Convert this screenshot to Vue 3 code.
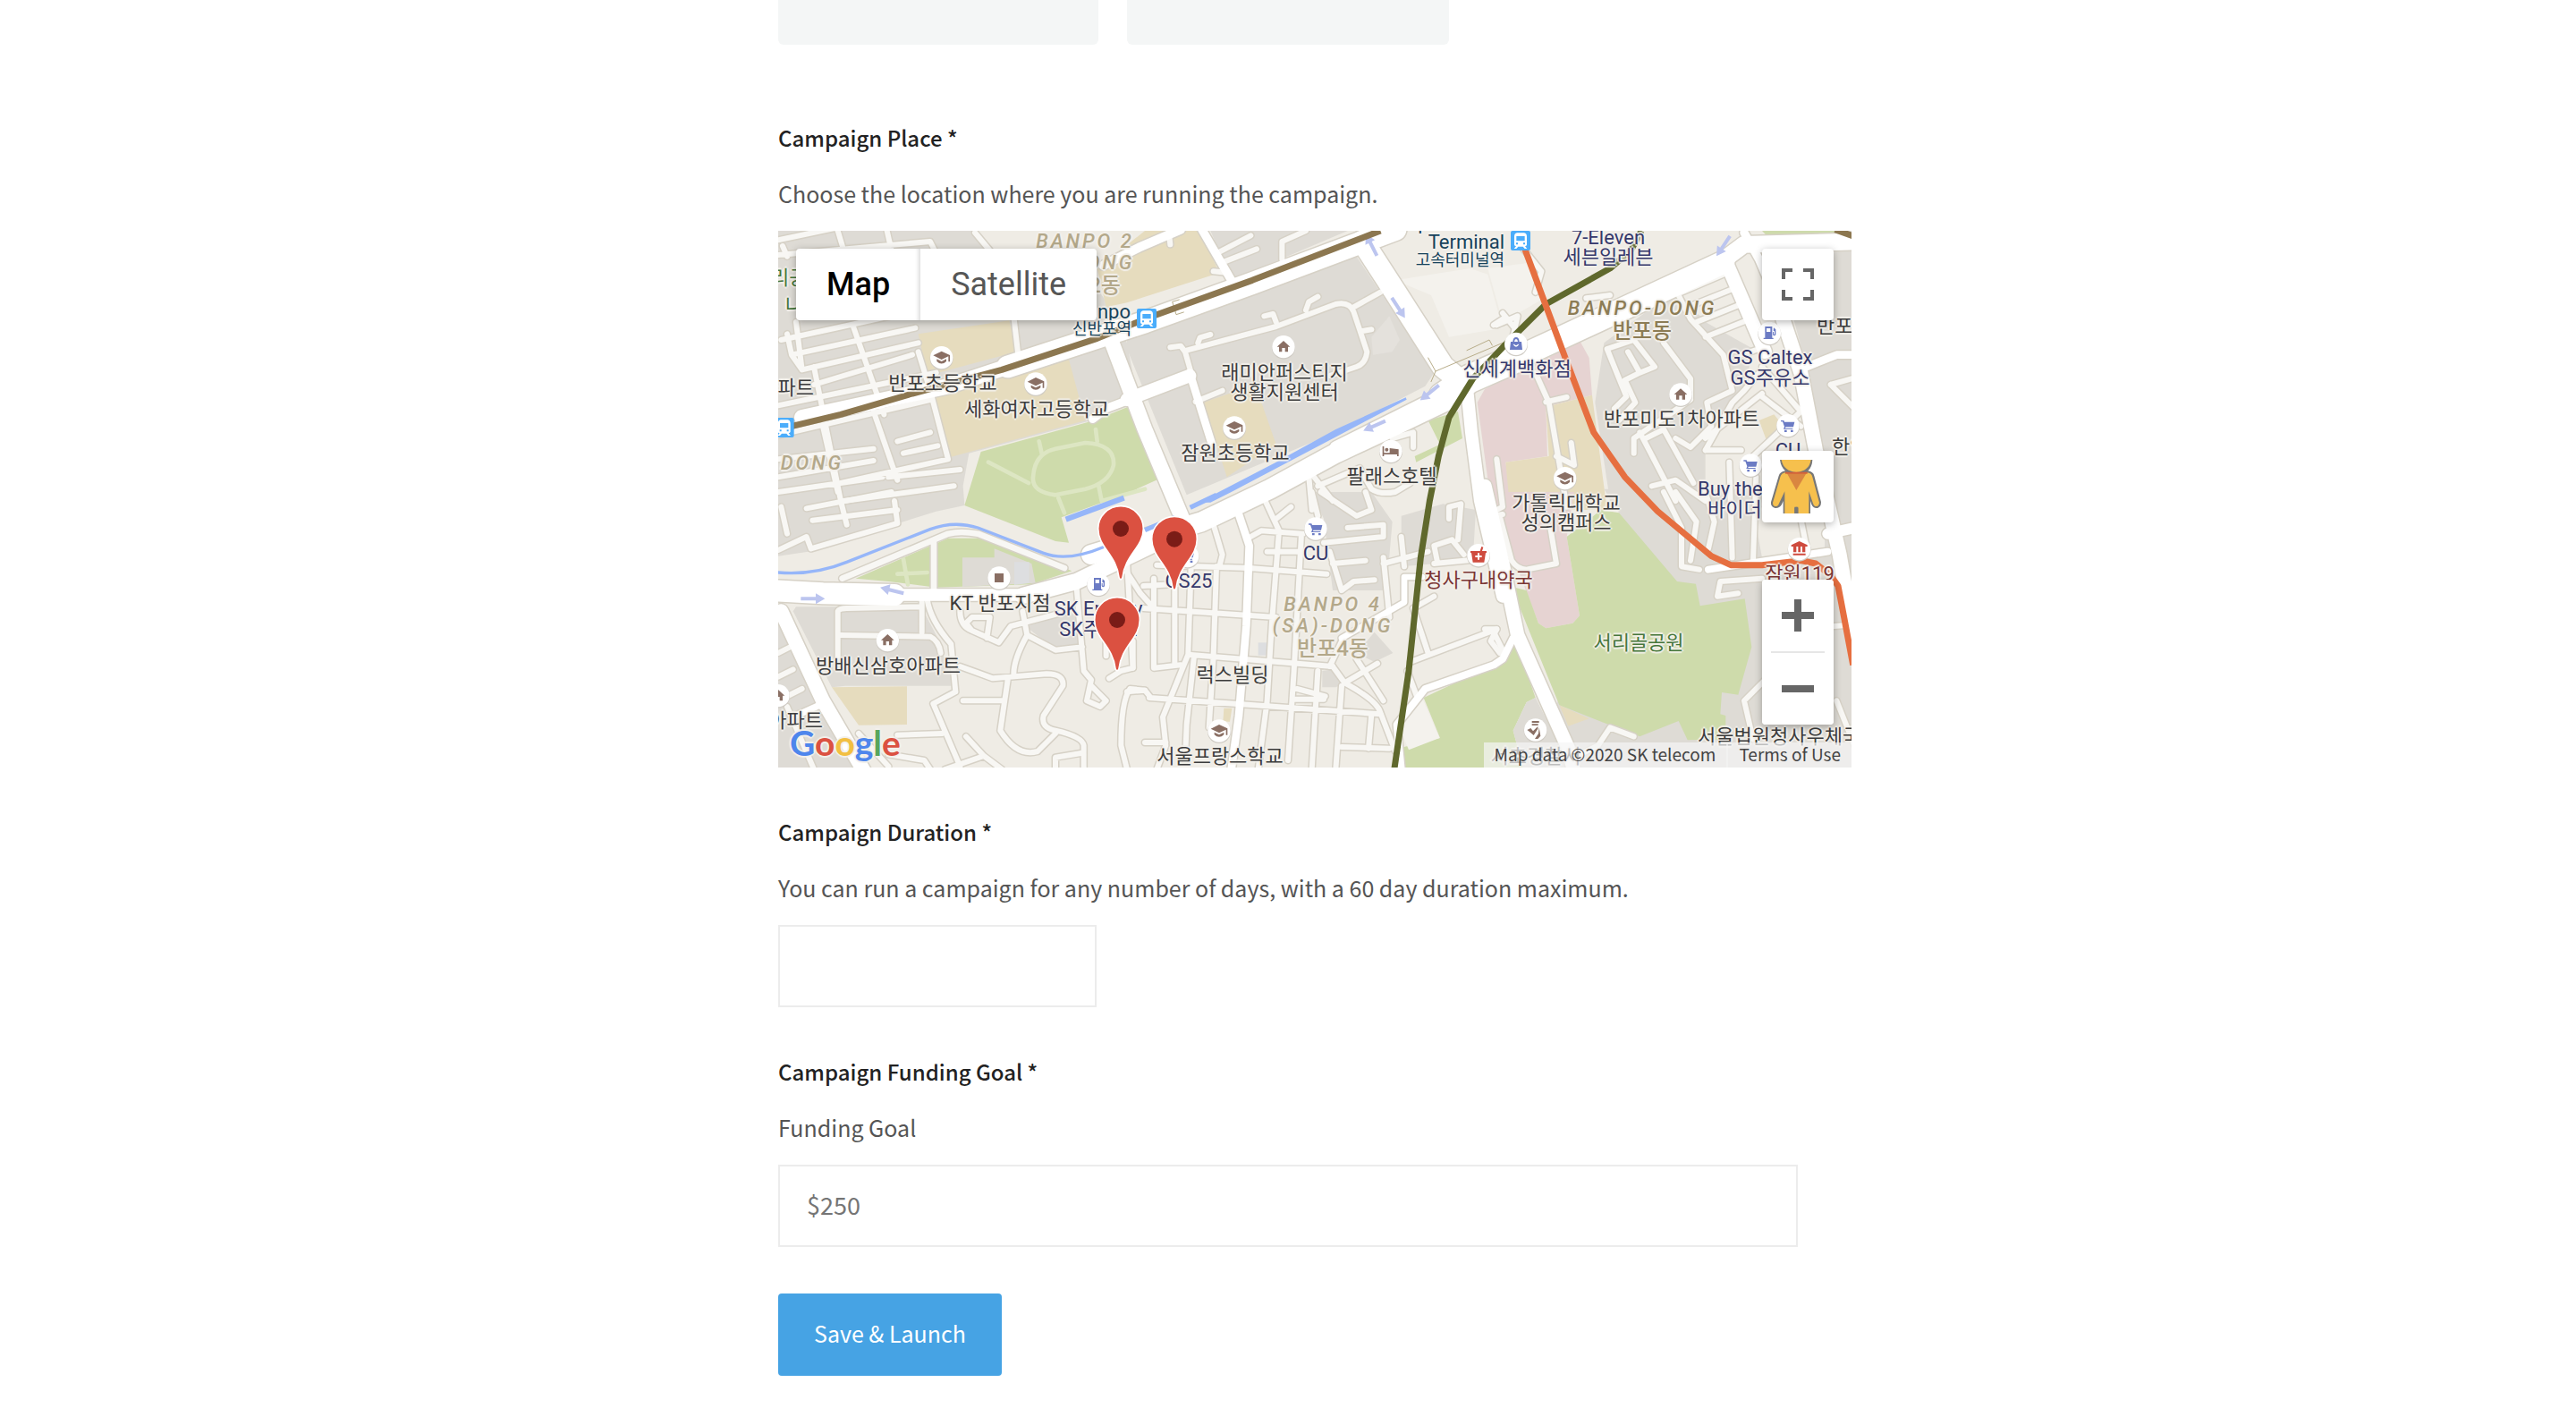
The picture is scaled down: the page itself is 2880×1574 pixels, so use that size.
<script setup>
import { ref } from 'vue'

const duration = ref('')
const goal = ref('')

// Origins of the six map tiles inside the 3600 x 1800 drawing.
const origins = [[-30, -24], [1170, -24], [2370, -24], [-30, 876], [1170, 876], [2370, 876]]
const at = (t, x = 0, y = 0) => `translate(${origins[t][0] + x} ${origins[t][1] + y})`

const block = '#dedbd5'
const park = '#cedbab'
const school = '#e6dcbe'
const clinic = '#e6d3d2'

const areas = [
  { t: 0, c: block, d: 'M30 24H960L1130 260L1200 400L1230 560L1080 660L670 770L650 880L655 945L560 965L130 1100L30 1115Z' },
  { t: 0, c: '#efece5', d: 'M690 24H1160L1200 110L1110 150L740 90Z' },
  { t: 0, c: school, d: 'M500 370L805 325L830 430L530 510Z' },
  { t: 0, c: school, d: 'M555 580L1005 455L1060 660L600 785Z' },
  { t: 0, c: park, d: 'M710 765L1090 660L1215 610L1310 855L1200 905L980 985L1005 1070L960 1065L655 945Z' },
  { t: 1, c: block, d: 'M280 24H740L350 190Z' },
  { t: 1, c: school, d: 'M60 24H245L310 165L0 265L-70 280L-100 150Z' },
  { t: 1, c: block, d: 'M0 370L760 95L1030 500L1000 545L700 700L200 910L0 420Z' },
  { t: 1, c: school, d: 'M255 600L430 540L500 740L335 850Z' },
  { t: 1, c: '#e4e1dc', d: 'M820 380L880 310L915 390L890 430L825 440Z' },
  { t: 1, c: '#f4f2ed', d: 'M900 190L1150 150L1210 170L1260 350L1080 380L1020 240Z' },
  { t: 1, c: park, d: 'M1010 660L1110 630L1125 720L970 800L965 780L1050 740Z' },
  { t: 2, c: '#f4f2ed', d: 'M10 150L160 130L200 250L60 330Z' },
  { t: 2, c: block, d: 'M400 400L590 260L660 240L740 330L900 420L870 560L740 720V930H420L370 600Z' },
  { t: 2, c: block, d: 'M1060 24H1230V930H1140L1100 560L1020 260Z' },
  { t: 2, c: '#efece5', d: 'M860 560L1060 540L1100 700L1110 760L860 900L750 900L760 760Z' },
  { t: 2, c: school, d: 'M920 660L970 640L1010 690L950 740Z' },
  { t: 2, c: park, d: 'M930 24H1180L1240 70L950 45Z' },
  { t: 5, c: block, d: 'M400 -10H1230V930H290L240 715L450 70Z' },
  { t: 5, c: '#efece5', d: 'M930 220L1140 190V90L1040 20L900 60Z' },
  { t: 2, c: clinic, d: 'M-25 600L0 555L320 395L350 450L360 575L205 615L210 780L70 800L90 930H20Z' },
  { t: 2, c: school, d: 'M205 615L360 575L410 960H85L70 800L215 780Z' },
  { t: 5, c: clinic, d: 'M20 0H300L275 150L318 415L295 440L205 457L180 440L100 230Z' },
  { t: 5, c: park, d: 'M390 60L450 70L645 300L708 308L722 382L872 358L895 520L850 680L795 672L790 745L808 750V830L680 832L650 768L520 820L440 790L250 715L110 370L100 320L140 330L180 440L205 457L295 440L318 415L275 150Z' },
  { t: 5, c: park, d: 'M105 500L170 690L140 705L95 800L130 930H-280L-310 865L-150 825L-205 690L60 565Z' },
  { t: 5, c: block, d: 'M140 705L170 690L290 930H130L95 800Z' },
  { t: 5, c: school, d: 'M250 715L350 760L280 785Z' },
  { t: 3, c: park, d: 'M290 290L600 155L700 155L850 200L1015 265L880 310L560 320L400 300Z' },
  { t: 3, c: block, d: 'M648 220H755V190L880 240L893 305L648 318Z' },
  { t: 3, c: '#dddee0', d: 'M822 235H872V305L822 312Z' },
  { t: 3, c: block, d: 'M90 385H510L560 480L620 650H255L210 655L80 400Z' },
  { t: 3, c: block, d: 'M30 400L180 700L290 930H30Z' },
  { t: 3, c: block, d: 'M860 450L1040 400L1050 530H960Z' },
  { t: 3, c: school, d: 'M210 655L462 652V780L300 782Z' },
  { t: 4, c: block, d: 'M620 0H820L890 100L870 330H690L660 90Z' },
  { t: 4, c: block, d: 'M830 470L892 540L830 570L770 540Z' },
  { t: 4, c: block, d: 'M655 600L690 595L735 640L700 655H655Z' },
  { t: 4, c: block, d: 'M920 80L1060 40L1170 60L1160 230L920 250Z' },
  { t: 4, c: '#dddee0', d: 'M440 505H470V548H440Z' },
  { t: 4, c: school, d: 'M325 725H352L345 770H322Z' },
  { t: 4, c: '#f4f2ed', d: 'M990 690L1048 825L945 865L910 780Z' }
]

const minor = [
  { t: 0, d: 'M30 55L220 15M45 75L60 110M30 105L540 60L555 90M230 24L250 90M395 24L410 90M690 30L740 90' },
  { t: 0, d: 'M40 390L500 290M75 440L490 350M110 490L500 400M150 540L480 440M30 610L560 500M90 330L110 490M60 370L75 440L110 490M150 480L240 930L260 1010M280 340L385 640' },
  { t: 0, d: 'M30 710L545 590M500 430L540 560L600 790M350 630L430 860M30 790L350 755M30 850L350 795M30 900L380 850M430 730L540 700M450 770L565 745M240 870L600 790M400 850L640 825M250 930L620 880M180 680L230 900M820 310L835 440' },
  { t: 1, d: 'M200 425L500 345L700 270Q745 260 760 295L805 430Q800 470 770 480L680 510M195 430L215 500M145 415L180 410L195 430M238 400L245 382L280 372M460 310L490 303L500 330M600 290L610 262L640 245M760 280L850 230M790 360L820 355M320 130L435 85M300 100L415 40M520 120V60L600 24M290 160L340 165M140 24L145 70M230 597L320 560' },
  { t: 1, d: 'M640 880L780 820L820 890Q850 910 900 900L950 870M620 840L690 930M890 720L960 700V750M610 850L620 960M1230 340L1260 320' },
  { t: 2, d: 'M110 60L190 160L170 230M40 340L110 310L90 400M60 300L100 350M340 250L420 240' },
  { t: 2, d: 'M410 420L500 390L570 480L520 500L480 430M410 420L475 580L435 620M520 500L470 525L505 600L450 660M600 400L690 520V590L620 640M650 240L690 320L800 440L830 560L745 600L760 680L690 750L640 720M660 230L800 170M680 280L830 220M710 330L860 270M740 380L890 320M500 770V720L690 590M520 700L640 930M600 690L700 870M740 760H860M540 720L600 690M740 760L830 600L870 560L920 500M740 720L930 570M930 480L1060 630L900 780M930 580L1060 680M1160 540L1240 620M1160 540L1230 520M860 440L920 420' },
  { t: 2, d: 'M170 500L215 600L275 950M205 598L275 582M290 735L300 810L240 780M40 790L60 950L20 970M560 880L640 860L740 930M820 800L830 1120M910 850L900 1130' },
  { t: 3, w: 20, d: 'M245 290L600 140Q640 130 700 140L990 255M552 170V330' },
  { t: 3, d: 'M230 560V400Q235 390 260 390L510 385M240 480L540 485Q570 500 575 540M512 360V470M530 360Q540 430 610 510L625 670M640 585L750 625L930 610Q990 610 985 650L920 750Q910 790 960 800Q1050 820 1055 850V930M625 670L550 710L640 920M650 700H780M800 630L775 800Q830 890 900 870L960 810M820 610Q820 560 865 480L850 400M640 400Q640 450 680 465L770 505L810 450L1000 400M680 465L660 440L680 420H740L730 490M865 480L960 530L1050 520M1030 310L1055 600L1080 630L1065 700L1110 720L1130 700L1080 650M1140 625L1180 600L1220 590L1200 230M1130 480V550M1260 665L1210 660Q1180 700 1180 850L1200 930' },
  { t: 3, d: 'M430 815L580 810M300 810L400 920M400 880L520 900L540 930M720 885L590 930M720 885L780 930M660 820L720 885M960 930V890L1050 875M30 540L80 515M30 620L80 595M50 690L110 660M60 720L150 930M125 55L410 0M145 95L430 60M140 190L430 105L420 30M30 195L125 150L140 190M40 50L60 140' },
  { t: 4, d: 'M100 245L410 255L670 275M55 390L500 420M205 545L690 585M75 690L850 745M720 855L880 860M60 840H130M90 290V590L180 580M160 320V580M55 315L150 310M215 250L205 545L120 755L130 850L100 930M300 250L290 550L275 790M225 550L200 780L195 900M510 130L485 450L470 700L440 930M585 140L560 600L540 900M640 600L620 930M720 650L700 930M570 660L665 685M560 695H660M585 200H470M415 150L450 130L590 140M450 0L510 130M500 90L550 50M290 110L320 210L310 250M0 270L45 340L90 390M20 500V590M0 670L60 665L80 690' },
  { t: 4, d: 'M660 170L860 150V110L740 120M680 200L720 330L760 300L830 295M690 240L800 230M860 220L880 420M860 240L1010 200M690 585L730 640L840 575M770 560L860 700M730 640Q840 700 850 740L900 870M680 585L720 500M820 745L810 860M1030 350L960 390L1010 540M950 570L1240 460M1230 470L1260 530M940 600L970 680M920 150L930 250M1040 230L1030 180L1090 160L1130 210M1080 90L1080 50L1120 40L1110 160M620 0L640 80M650 0L770 80L820 60L800 0M1030 240L1240 220' },
  { t: 5, d: 'M50 80L90 230Q110 260 140 260L240 240L220 120M640 0L710 100L690 230M600 0L660 120V250L720 260M740 0L770 100L750 190M850 340L780 350L790 300L930 290M380 850L420 790L500 820M280 900L380 850M940 630L870 700L900 830M1170 450L1240 445M1180 700L1240 850M1060 90L1080 190M0 460L40 460L20 500L50 540M20 80L60 75' }
]

const major = [
  { t: 0, w: 52, d: 'M110 650L600 545L860 460' },
  { t: 0, w: 74, d: 'M800 480L1260 330L1620 200L2100 20' },
  { t: 0, w: 50, d: 'M1150 400L1260 690L1390 1000L1415 1020' },
  { t: 0, w: 28, d: 'M1085 655L1130 620L1210 590' },
  { t: 1, w: 30, d: 'M-80 140L40 80L180 20' },
  { t: 1, w: 28, d: 'M240 0L350 190' },
  { t: 1, w: 44, d: 'M0 590L210 510' },
  { t: 1, w: 26, d: 'M210 500L285 740' },
  { t: 1, w: 74, d: 'M790 60L900 230L1060 480L1110 520' },
  { t: 1, w: 66, d: 'M-120 1110L250 1000L480 890L700 770L850 700L1080 590' },
  { t: 1, w: 40, d: 'M700 750L1020 590' },
  { t: 1, w: 94, d: 'M1060 580L1150 520L1310 450' },
  { t: 1, w: 42, d: 'M1140 550L1155 700L1185 930L1260 1250' },
  { t: 2, w: 76, d: 'M60 470L110 450L800 130' },
  { t: 2, w: 56, d: 'M790 130L870 70L1240 60' },
  { t: 2, w: 46, d: 'M810 130L940 430' },
  { t: 2, w: 28, d: 'M870 30L920 120L1010 330' },
  { t: 2, w: 48, d: 'M1000 320L1060 500L1110 760L1190 1110L1240 1400' },
  { t: 2, w: 26, d: 'M1080 480L1180 440H1240' },
  { t: 3, w: 72, d: 'M0 330L180 340L420 345' },
  { t: 3, w: 40, d: 'M380 345H860' },
  { t: 3, w: 54, d: 'M850 348L1030 300L1300 170' },
  { t: 3, w: 48, d: 'M40 400L180 700L320 940' },
  { t: 3, w: 22, d: 'M90 750L180 710' },
  { t: 4, w: 26, d: 'M370 60L410 180L400 450L375 750L350 930' },
  { t: 4, w: 24, d: 'M920 930L905 780L1000 660L1230 580L1260 560L1295 490' },
  { t: 4, w: 20, d: 'M990 285H930V370L720 490' },
  { t: 5, w: 46, d: 'M0 -20L60 240L110 480L280 860L300 940' },
  { t: 5, w: 24, d: 'M750 260L1150 200' },
  { t: 5, w: 36, d: 'M1150 140L1240 120' }
]

const parkPaths = [
  { t: 0, d: 'M905 730L915 775M1095 690L1100 730M1060 735Q1160 740 1155 810Q1140 870 1060 890L960 910Q880 900 885 850Q890 770 960 755ZM735 800L870 870M1105 880L1115 930L1260 890' },
  { t: 3, d: 'M970 20L990 70M450 225L465 310M430 275L530 270' }
]

const arrows = [
  [1, 820, 72, -117], [1, 910, 282, 57], [1, 1015, 567, 141], [1, 830, 678, 156],
  [2, 800, 75, 124], [3, 146, 358, 0], [3, 412, 330, 194]
]

const stations = [[0, 50, 684], [1, 66, 318], [2, 120, 57]]

const places = [
  ['cap', 0, 578, 449], ['cap', 0, 894, 537], ['cap', 1, 360, 684], ['cap', 2, 269, 854], ['cap', 4, 309, 801],
  ['home', 1, 525, 413], ['home', 2, 657, 573], ['home', 3, 397, 497], ['home', 3, 30, 683],
  ['bed', 1, 885, 763], ['bag', 2, 105, 403], ['fuel', 2, 955, 367], ['fuel', 3, 1104, 310],
  ['cart', 2, 1017, 677], ['cart', 2, 892, 810], ['cart', 4, 633, 123], ['cart', 4, 203, 215],
  ['office', 3, 771, 288], ['drug', 4, 1179, 212], ['hall', 5, 1055, 191], ['police', 5, 170, 798]
]

const glyphs = {
  cap: { c: '#8a6f64', d: 'M0 -21L28 -8V14H23V-4L0 7L-28 -7ZM-16 5L0 13L16 5V13Q0 28 -16 13Z' },
  home: { c: '#8a6f64', d: 'M0 -20L22 0H15V17H5V4H-5V17H-15V0H-22Z' },
  bed: { c: '#8a6f64', d: 'M-28 -16H-23V6H-4V-10L26 -6V17H21V11H-23V17H-28ZM-20 -5A6 6 0 1 1 -8 -5A6 6 0 1 1 -20 -5Z' },
  bag: { c: '#6b7bc4', d: 'M-18 -7H-11Q-10 -22 0 -22Q10 -22 11 -7H18L21 20H-21ZM-6 -7H6Q5 -16 0 -16Q-5 -16 -6 -7ZM-10 2Q0 18 10 2L6 1Q0 9 -6 1Z' },
  fuel: { c: '#6b7bc4', d: 'M-15 -22H9V16H13V20H-20V16H-15ZM-10 -16V-4H3V-16ZM14 -18L21 -12V6Q15 12 11 5V-4H14V4H17V-6L13 -8Z' },
  cart: { c: '#6b7bc4', d: 'M-24 -17H-14L-12 -12H22L18 5H-8L-9 9H16V12H-15L-12 4L-18 -13H-24ZM-12 15H-4V22H-12ZM9 15H17V22H9Z' },
  office: { c: '#8a6f64', d: 'M-15 -15H15V15H-15Z' },
  drug: { c: '#cf4b3e', d: 'M-27 -14H5L10 -29L16 -27L12 -14H27V-8H24L19 24H-19L-24 -8H-27ZM-3 -7V1H-11V7H-3V15H3V7H11V1H3V-7Z' },
  hall: { c: '#cf4b3e', d: 'M0 -26L27 -13V-8H20V11H10V-8H4V11H-4V-8H-10V11H-20V-8H-27V-13ZM-21 15H21V21H-21Z' },
  police: { c: '#8a6f64', d: 'M-12 -30H12V-24H-12ZM-12 -20H9V-15H-12ZM-28 0L-16 -6L-8 4L8 -12V-4L-6 18L-20 6ZM12 -8L17 20L8 30H-2L10 12Z' }
}

const pins = [[3, 1179, 123], [4, 159, 158], [3, 1167, 429]]

// x is the anchor: centre by default, or the edge named in "side".
const labels = [
  { k: 'ward soft', x: 343, y: 12, s: 'BANPO 2' },
  { k: 'ward soft', x: 343, y: 36, s: '(I)-DONG' },
  { k: 'wardko soft', x: 343, y: 61, s: '반포2동' },
  { k: 'green', x: -8, y: 53, s: '리공원', side: 'left' },
  { k: 'green', x: 8, y: 84, s: '나무', side: 'left' },
  { k: 'metro', x: 394, y: 91, s: 'Sinbanpo', side: 'right' },
  { k: 'metro small', x: 362, y: 110, s: '신반포역' },
  { k: '', x: 184, y: 171, s: '반포초등학교' },
  { k: '', x: 289, y: 200, s: '세화여자고등학교' },
  { k: '', x: 40, y: 176, s: '아파트', side: 'right' },
  { k: 'ward soft', x: 73, y: 260, s: 'DONG', side: 'right' },
  { k: '', x: 566, y: 159, s: '래미안퍼스티지' },
  { k: '', x: 566, y: 181, s: '생활지원센터' },
  { k: '', x: 511, y: 249, s: '잠원초등학교' },
  { k: '', x: 686, y: 275, s: '팔래스호텔' },
  { k: 'metro', x: 812, y: -9, s: 'Express Bus', side: 'right' },
  { k: 'metro', x: 812, y: 13, s: 'Terminal', side: 'right' },
  { k: 'metro small', x: 812, y: 33, s: '고속터미널역', side: 'right' },
  { k: 'shop', x: 928, y: 8, s: '7-Eleven' },
  { k: 'shop', x: 928, y: 30, s: '세븐일레븐' },
  { k: 'ward', x: 966, y: 87, s: 'BANPO-DONG' },
  { k: 'wardko', x: 966, y: 112, s: '반포동' },
  { k: 'shop', x: 826, y: 155, s: '신세계백화점' },
  { k: '', x: 1161, y: 107, s: '반포자이', side: 'left' },
  { k: 'shop', x: 1109, y: 142, s: 'GS Caltex' },
  { k: 'shop', x: 1109, y: 165, s: 'GS주유소' },
  { k: '', x: 1010, y: 211, s: '반포미도1차아파트' },
  { k: 'shop', x: 1129, y: 246, s: 'CU' },
  { k: '', x: 1178, y: 242, s: '한양', side: 'left' },
  { k: 'shop', x: 1028, y: 289, s: 'Buy the', side: 'left' },
  { k: 'shop', x: 1039, y: 312, s: '바이더웨이', side: 'left' },
  { k: '', x: 881, y: 305, s: '가톨릭대학교' },
  { k: '', x: 881, y: 327, s: '성의캠퍼스' },
  { k: 'red', x: 783, y: 391, s: '청사구내약국' },
  { k: 'green', x: 962, y: 461, s: '서리골공원' },
  { k: 'red', x: 1142, y: 384, s: '잠원119' },
  { k: '', x: 1028, y: 566, s: '서울법원청사우체국', side: 'left' },
  { k: '', x: 847, y: 588, s: '서초경찰서' },
  { k: '', x: 248, y: 417, s: 'KT 반포지점' },
  { k: 'shop', x: 358, y: 423, s: 'SK Energy' },
  { k: 'shop', x: 358, y: 446, s: 'SK주유소' },
  { k: '', x: 123, y: 487, s: '방배신삼호아파트' },
  { k: '', x: 50, y: 548, s: '아파트', side: 'right' },
  { k: 'shop', x: 459, y: 392, s: 'GS25' },
  { k: 'shop', x: 601, y: 361, s: 'CU' },
  { k: 'ward soft', x: 620, y: 418, s: 'BANPO 4' },
  { k: 'ward soft', x: 620, y: 442, s: '(SA)-DONG' },
  { k: 'wardko soft', x: 620, y: 467, s: '반포4동' },
  { k: '', x: 508, y: 497, s: '럭스빌딩' },
  { k: '', x: 494, y: 588, s: '서울프랑스학교' }
]
</script>

<template>
  <main class="page">
    <div class="cards">
      <div class="card"></div>
      <div class="card"></div>
    </div>

    <form class="form" @submit.prevent>
      <section class="field">
        <h2 class="title">Campaign Place *</h2>
        <p class="hint">Choose the location where you are running the campaign.</p>

        <div class="map">
          <svg class="layer" viewBox="0 0 3600 1800" aria-hidden="true">
            <path v-for="(a, i) in areas" :key="'a' + i" :transform="at(a.t)" :d="a.d" :fill="a.c" />
            <g class="line">
              <path v-for="(p, i) in parkPaths" :key="'p' + i" :transform="at(p.t)" :d="p.d" stroke="#dde6c3" stroke-width="14" />
              <path v-for="(r, i) in minor" :key="'mc' + i" :transform="at(r.t)" :d="r.d" stroke="#d6d1c6" :stroke-width="(r.w || 18) + 9" />
              <path v-for="(r, i) in major" :key="'Mc' + i" :transform="at(r.t)" :d="r.d" stroke="#d6d1c6" :stroke-width="r.w + 9" />
              <path v-for="(r, i) in minor" :key="'m' + i" :transform="at(r.t)" :d="r.d" stroke="#f8f7f4" :stroke-width="r.w || 18" />
              <path v-for="(r, i) in major" :key="'M' + i" :transform="at(r.t)" :d="r.d" stroke="#fff" :stroke-width="r.w" />
              <g stroke="#96b6f9">
                <path :transform="at(3)" stroke-width="10" d="M30 270Q150 280 260 235L540 125Q620 95 700 120L920 205Q1000 235 1120 185" />
                <path :transform="at(3)" stroke-width="18" stroke-linecap="butt" d="M995 92L1190 20" />
                <path :transform="at(4)" stroke-width="16" stroke-linecap="butt" d="M60 128L160 85M212 52L300 10" />
              </g>
            </g>
            <path :transform="at(1)" fill="#96b6f9" d="M240 935L500 800L700 690L935 583L938 590L720 705L350 900L280 935Z" />
            <g class="line thin">
              <path :transform="at(1)" d="M1010 450L1035 495L1020 530M1035 495L1260 400M1140 425L1215 390L1225 408M175 255L152 262L165 305L190 297" />
            </g>
            <path
              v-for="(a, i) in arrows" :key="'w' + i" fill="#bcc5ef"
              :transform="at(a[0], a[1], a[2]) + ` rotate(${a[3]})`"
              d="M-40 -6H10V-18L41 0L10 18V6H-40Z"
            />
            <g class="line rail">
              <path :transform="at(0)" stroke="#8c7750" d="M30 690L240 640L480 570L780 490L1100 385L1260 320L1300 305L1620 190L2050 24" />
              <path :transform="at(2)" stroke="#8c7750" d="M1175 20L1245 45" />
              <path :transform="at(2)" stroke="#5f682c" d="M525 24L490 90L420 150L205 270L60 415L-40 520L-120 650L-155 780L-185 930L-215 1120L-255 1500L-305 1840" />
              <path :transform="at(2)" stroke="#e66f40" d="M125 60L270 450L365 700L470 850L580 965L760 1115L825 1145H930L1060 1130L1110 1140L1160 1180L1185 1215L1205 1320L1235 1480" />
            </g>
            <g v-for="(s, i) in stations" :key="'s' + i" :transform="at(...s)">
              <rect x="-33" y="-33" width="66" height="66" rx="6" fill="#4badfb" />
              <path fill="#fff" fill-rule="evenodd" d="M-12 -26H12Q21 -24 21 -14V14Q20 18 15 19L22 27H14L8 20H-8L-14 27H-22L-15 19Q-20 18 -21 14V-14Q-21 -24 -12 -26ZM-14 -15V1H14V-15ZM-15 7V13H-9V7ZM9 7V13H15V7Z" />
            </g>
            <g v-for="(p, i) in places" :key="'i' + i" :transform="at(p[1], p[2], p[3])">
              <circle cy="3" r="39" fill="#cfcbc4" />
              <circle r="38" fill="#fff" />
              <path fill-rule="evenodd" :fill="glyphs[p[0]].c" :d="glyphs[p[0]].d" />
            </g>
          </svg>

          <span
            v-for="(l, i) in labels" :key="'l' + i"
            class="label" :class="[l.k, l.side]"
            :style="{ left: l.x + 'px', top: l.y + 'px' }"
          >{{ l.s }}</span>

          <svg class="layer" viewBox="0 0 3600 1800" aria-hidden="true">
            <g v-for="(p, i) in pins" :key="'pin' + i" :transform="at(...p)">
              <path
                fill="#db5141" stroke="#fff" stroke-width="5"
                d="M0 -76A76 76 0 0 1 76 0C76 62 14 88 6 164Q0 178 -6 164C-14 88 -76 62 -76 0A76 76 0 0 1 0 -76Z"
              />
              <circle r="27" fill="#7a1c17" />
            </g>
          </svg>

          <div class="types">
            <button type="button" class="type active">Map</button>
            <button type="button" class="type">Satellite</button>
          </div>

          <div class="tools">
            <button type="button" class="tool" aria-label="Toggle fullscreen">
              <svg width="36" height="36" viewBox="0 0 36 36"><path fill="none" stroke="#666" stroke-width="4" d="M2 12V2H12M24 2H34V12M34 24V34H24M12 34H2V24" /></svg>
            </button>
            <div class="lower">
              <button type="button" class="tool" aria-label="Street View">
                <svg width="60" height="60" viewBox="0 0 180 180">
                  <path fill="#777" d="M30 0H139Q138 24 124 37Q142 40 145 54L168 142Q168 160 154 162Q142 163 136 150L132 138V180H41V138L36 150Q28 163 14 162Q-2 158 0 142L26 54Q30 40 48 37Q33 24 30 0Z" />
                  <path fill="#f6c04d" d="M35 0H134Q128 38 85 42Q42 38 35 0Z" />
                  <path fill="#f6c04d" d="M48 43H122Q136 44 139 58L162 144Q161 156 152 156Q144 156 141 146L127 106V180H91V158H79V180H46V106L27 146Q24 156 15 156Q6 156 6 144L31 58Q35 44 48 43Z" />
                  <path fill="#777" d="M79 180V162Q85 154 91 162V180Z" />
                  <path fill="#d98640" d="M52 43H120L85 102Z" />
                  <path fill="#d4623a" d="M48 41H122V47H48Z" />
                </svg>
              </button>
              <div class="zoom">
                <button type="button" class="tool" aria-label="Zoom in">
                  <svg width="36" height="36" viewBox="0 0 36 36"><path fill="#666" d="M14 0H22V14H36V22H22V36H14V22H0V14H14Z" /></svg>
                </button>
                <span class="rule"></span>
                <button type="button" class="tool" aria-label="Zoom out">
                  <svg width="36" height="36" viewBox="0 0 36 36"><path fill="#666" d="M0 14H36V22H0Z" /></svg>
                </button>
              </div>
            </div>
          </div>

          <a class="brand" href="#" aria-label="Google"><span class="b">G</span><span class="r">o</span><span class="y">o</span><span class="b">g</span><span class="g">l</span><span class="r">e</span></a>

          <div class="credits">
            <span class="credit">Map data ©2020 SK telecom</span>
            <a class="credit terms" href="#">Terms of Use</a>
          </div>
        </div>
      </section>

      <section class="field">
        <label class="title" for="duration">Campaign Duration *</label>
        <p class="hint">You can run a campaign for any number of days, with a 60 day duration maximum.</p>
        <input id="duration" v-model="duration" class="input short" type="text">
      </section>

      <section class="field">
        <label class="title" for="goal">Campaign Funding Goal *</label>
        <p class="hint">Funding Goal</p>
        <input id="goal" v-model="goal" class="input" type="text" placeholder="$250">
      </section>

      <button type="submit" class="save">Save &amp; Launch</button>
    </form>
  </main>
</template>

<style>
body {
  background: #fff;
}
</style>

<style scoped>
.page {
  box-sizing: border-box;
  max-width: 1140px;
  margin: 0 auto;
  padding-bottom: 36px;
  font: 25px/40px "Noto Sans CJK KR", "Noto Sans", sans-serif;
  color: #555;
}

.cards {
  display: grid;
  grid-template-columns: 358px 360px;
  gap: 32px;
  margin-bottom: 84px;
}

.card {
  height: 50px;
  border-radius: 0 0 6px 6px;
  background: #f4f6f6;
}

.field {
  margin-bottom: 52px;
}

.title {
  display: block;
  margin: 0 0 22px;
  font-size: 24px;
  font-weight: 500;
  line-height: 40px;
  color: #222;
}

.hint {
  margin: 0 0 22px;
}

.input {
  display: block;
  box-sizing: border-box;
  width: 100%;
  height: 92px;
  padding: 0 30px 4px;
  border: 2px solid #ececec;
  border-radius: 0;
  background: #fff;
  font: inherit;
  font-size: 27px;
  color: #555;
}

.input::placeholder {
  color: #757575;
  opacity: 1;
}

.short {
  width: 356px;
}

.save {
  height: 92px;
  padding: 0 40px 4px;
  border: 0;
  border-radius: 4px;
  background: #46a3e4;
  font: inherit;
  color: #fff;
}

.map {
  position: relative;
  display: flex;
  justify-content: space-between;
  align-items: flex-start;
  box-sizing: border-box;
  height: 600px;
  margin-right: -60px;
  padding: 20px;
  overflow: hidden;
  background: #efece5;
}

.layer {
  position: absolute;
  top: 0;
  left: 0;
  width: 1200px;
  height: 600px;
}

.line {
  stroke-linecap: round;
}

.line path {
  fill: none;
  stroke-linejoin: round;
}

.thin {
  stroke: #b8ad8a;
  stroke-width: 3;
}

.rail {
  stroke-width: 21;
  stroke-linecap: butt;
}

.label {
  position: absolute;
  transform: translate(-50%, -50%);
  font: 22px/24px Roboto, "Noto Sans CJK KR", sans-serif;
  white-space: nowrap;
  color: #3c3c3c;
  text-shadow: 2px 0 1px #f3f0eb, -2px 0 1px #f3f0eb, 0 2px 1px #f3f0eb, 0 -2px 1px #f3f0eb, 0 0 3px #f3f0eb;
}

.label.left {
  transform: translate(0, -50%);
}

.label.right {
  transform: translate(-100%, -50%);
}

.label.metro {
  color: #16425b;
}

.label.small {
  font-size: 18px;
}

.label.shop {
  color: #35386b;
}

.label.green {
  color: #46763b;
}

.label.red {
  color: #7a3533;
}

.label.ward {
  font-style: italic;
  font-weight: 500;
  letter-spacing: 3px;
  color: #8c7c55;
}

.label.wardko {
  font-size: 24px;
  font-weight: 500;
  color: #8c7c55;
}

.label.soft {
  color: #b3a88a;
}

.types {
  position: relative;
  display: flex;
  border-radius: 4px;
  background: #fff;
  box-shadow: 0 2px 8px rgba(0, 0, 0, 0.3);
}

.type {
  height: 80px;
  padding: 0 34px;
  border: 0;
  background: none;
  font: 36px/40px Roboto, sans-serif;
  color: #565656;
}

.type.active {
  font-weight: 500;
  color: #000;
  box-shadow: inset -4px 0 4px -2px rgba(0, 0, 0, 0.15);
}

.tools {
  position: relative;
  display: flex;
  flex-direction: column;
  gap: 146px;
}

.lower {
  display: flex;
  flex-direction: column;
  gap: 64px;
}

.tool {
  display: flex;
  align-items: center;
  justify-content: center;
  width: 80px;
  height: 80px;
  padding: 0;
  border: 0;
  border-radius: 4px;
  background: #fff;
  box-shadow: 0 2px 8px rgba(0, 0, 0, 0.3);
}

.zoom {
  display: flex;
  flex-direction: column;
  align-items: center;
  border-radius: 4px;
  background: #fff;
  box-shadow: 0 2px 8px rgba(0, 0, 0, 0.3);
}

.zoom .tool {
  box-shadow: none;
}

.rule {
  width: 60px;
  height: 2px;
  background: #e6e6e6;
}

.brand {
  position: absolute;
  bottom: 4px;
  left: 13px;
  font: 700 39px/48px Lato, sans-serif;
  text-decoration: none;
  text-shadow: 2px 0 1px #f3f0eb, -2px 0 1px #f3f0eb, 0 2px 1px #f3f0eb, 0 -2px 1px #f3f0eb;
}

.b {
  color: #4e86ec;
}

.r {
  color: #db5141;
}

.y {
  color: #f2bf42;
}

.g {
  color: #58a55c;
}

.credits {
  position: absolute;
  right: 0;
  bottom: 0;
  display: flex;
  background: rgba(245, 245, 245, 0.7);
}

.credit {
  padding: 0 12px 2px;
  font-size: 19px;
  line-height: 26px;
  color: #444;
  text-decoration: none;
}

.terms {
  border-left: 2px solid rgba(245, 245, 245, 0.6);
}
</style>
